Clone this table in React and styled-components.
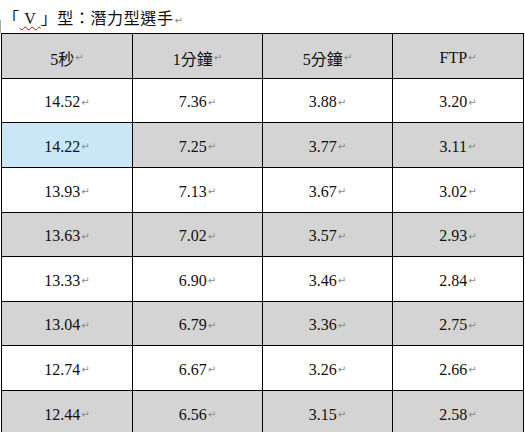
import styled, { createGlobalStyle } from "styled-components";

const GlobalStyle = createGlobalStyle`
  body {
    margin: 0;
    background: #fff;
    font-family: "Liberation Serif", "Noto Sans CJK TC", serif;
    color: #111;
  }
`;

const header = ["5秒", "1分鐘", "5分鐘", "FTP"];

const rows = [
  ["14.52", "7.36", "3.88", "3.20"],
  ["14.22", "7.25", "3.77", "3.11"],
  ["13.93", "7.13", "3.67", "3.02"],
  ["13.63", "7.02", "3.57", "2.93"],
  ["13.33", "6.90", "3.46", "2.84"],
  ["13.04", "6.79", "3.36", "2.75"],
  ["12.74", "6.67", "3.26", "2.66"],
  ["12.44", "6.56", "3.15", "2.58"],
];

const App = () => {
  return (
    <>
      <GlobalStyle />
      <Page>
        <Title>
          「<Spell> V </Spell>」型：潛力型選手<Mark>↵</Mark>
        </Title>
        <Table>
          {header.map((h) => (
            <Cell key={h} $tone="gray">
              {h}
              <Mark>↵</Mark>
            </Cell>
          ))}
          {rows.map((row, r) =>
            row.map((v, c) => (
              <Cell
                key={`${r}-${c}`}
                $tone={r === 1 && c === 0 ? "blue" : r % 2 ? "gray" : "white"}
              >
                {v}
                <Mark>↵</Mark>
              </Cell>
            ))
          )}
        </Table>
      </Page>
    </>
  );
};

export default App;

const Page = styled.div`
  width: 525px;
  padding-left: 1px;
  box-sizing: border-box;
`;

const Title = styled.div`
  position: relative;
  height: 33px;
  box-sizing: border-box;
  padding: 10px 0 0 2px;
  font-size: 16px;
  line-height: 17px;
  letter-spacing: 0.6px;
  white-space: nowrap;

  &::before {
    content: "";
    position: absolute;
    left: -1px;
    top: 20px;
    width: 1px;
    height: 13px;
    background: #a8a8a8;
  }
`;

const Spell = styled.span`
  text-decoration: underline wavy #e00000;
  text-decoration-thickness: 1px;
  text-underline-offset: 2px;
`;

const Mark = styled.span`
  font-family: "DejaVu Sans", sans-serif;
  font-size: 10px;
  letter-spacing: 0;
  color: #8a8a8a;
  margin-left: 1px;
`;

const Table = styled.div`
  display: grid;
  grid-template-columns: 130px 129px 129px 130px;
  grid-template-rows: 44px 43px 44px 44px 43px 44px 43px 44px 44px;
  gap: 1px;
  width: 523px;
  box-sizing: border-box;
  border: 1px solid #000;
  background: #000;
`;

const tones = {
  white: "#ffffff",
  gray: "#d3d4d3",
  blue: "#cae7f8",
};

const Cell = styled.div`
  display: flex;
  align-items: center;
  justify-content: center;
  padding-top: 3px;
  box-sizing: border-box;
  background: ${(p) => tones[p.$tone]};
  font-size: 16px;
  white-space: nowrap;
`;
